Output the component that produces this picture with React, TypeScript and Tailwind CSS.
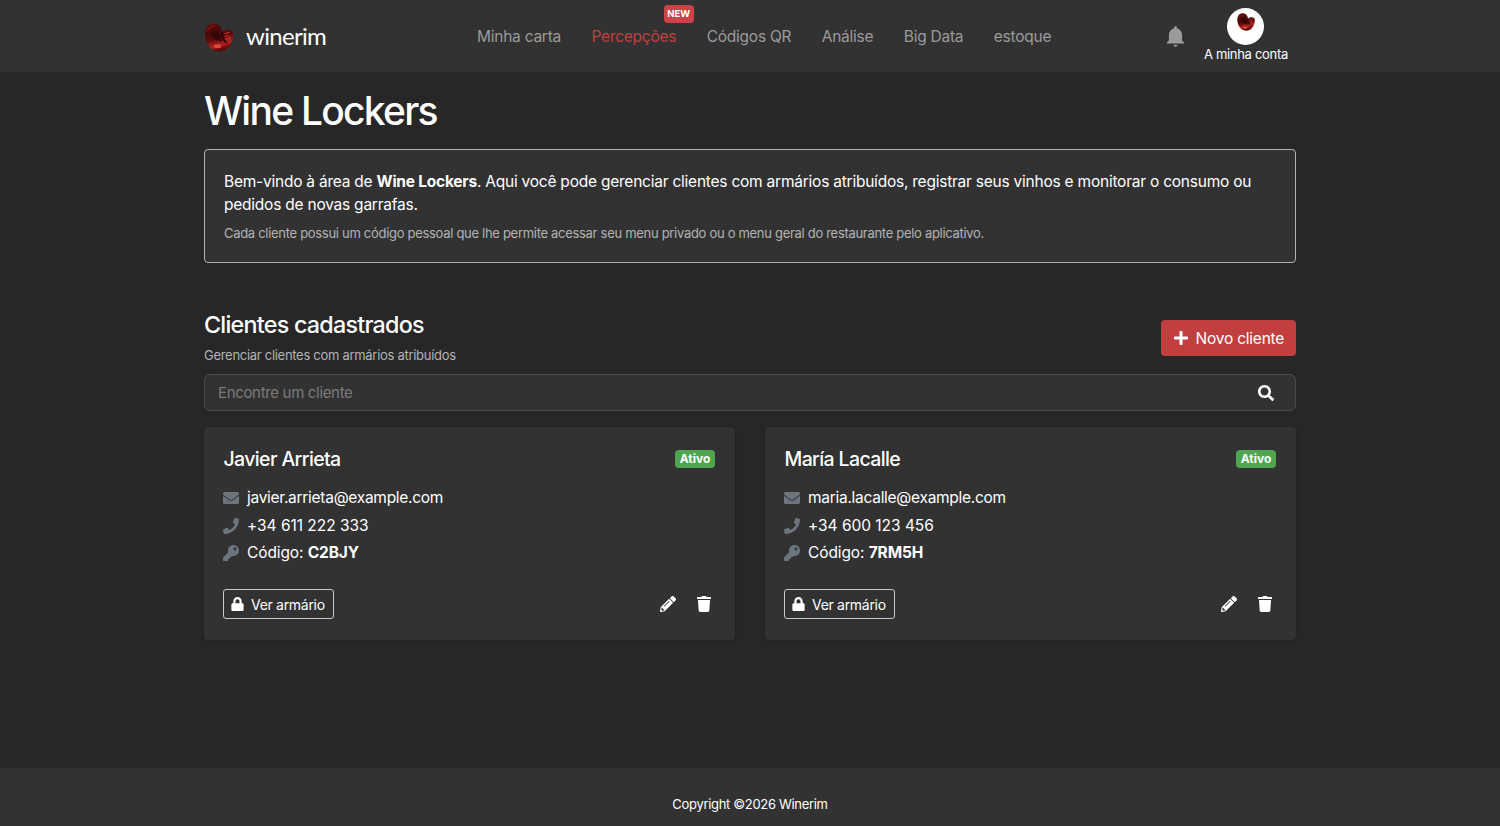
import { FaEnvelope, FaKey, FaLock, FaPencilAlt, FaPhone, FaPlus, FaSearch, FaTrash } from "react-icons/fa"
import { IoMdNotifications } from "react-icons/io"

type Client = { name: string; email: string; phone: string; code: string }

const clients: Client[] = [
    { name: "Javier Arrieta", email: "javier.arrieta@example.com", phone: "+34 611 222 333", code: "C2BJY" },
    { name: "María Lacalle", email: "maria.lacalle@example.com", phone: "+34 600 123 456", code: "7RM5H" },
]

const links = ["Minha carta", "Percepções", "Códigos QR", "Análise", "Big Data", "estoque"]

function Logo(props: { id: string; className: string }) {
    return (
        <svg viewBox="0 0 30 30" className={props.className}>
            <defs>
                <linearGradient id={props.id + "-base"} x1="0" y1="0" x2="0.3" y2="1">
                    <stop offset="0" stopColor="#6e0f0e" />
                    <stop offset="0.3" stopColor="#4a0909" />
                    <stop offset="0.6" stopColor="#5c0c0b" />
                    <stop offset="0.85" stopColor="#b3211e" />
                    <stop offset="1" stopColor="#5a0b0a" />
                </linearGradient>
            </defs>
            <path d="M0.5 11C0.5 5 4 0.5 9 0.5c5 0 8.500 3 9.500 8.500C21 7 25 6 28 8c3 3 1.500 10-1 14-3 5-7 7.500-12 7.500C6 29.500 0.500 20 0.500 11z" fill={`url(#${props.id}-base)`} />
            <path d="M18.500 9C17.500 13 19 18 23 20.500" stroke="#1f0404" strokeWidth="1.500" fill="none" />
            <path d="M6 11c2-3 6-3 9-1 2 3 2 6 4 9-5 0-6-1-8-2-3-1-4-3-5-6z" fill="#250505" opacity="0.7" />
            <ellipse cx="13.5" cy="24" rx="4" ry="2" fill="#e8524a" opacity="0.8" />
            <path d="M21 11l5-1.500M21 14l4-1M22 17l3-2M25 18l2-4" stroke="#d8403a" strokeWidth="1.100" opacity="0.8" fill="none" />
            <path d="M3 9c1-4 4-6 8-6" stroke="#a81d1a" strokeWidth="1.200" opacity="0.6" fill="none" />
        </svg>
    )
}

function Header() {
    return (
        <header className="h-[72px] bg-[#323232]">
            <div className="w-[1092px] h-full mx-auto flex items-center">
                <div className="w-[273px] flex items-center gap-[12px]">
                    <Logo id="brand" className="w-[30px] h-[29px] mt-[2px]" />
                    <span className="font-[Lato] text-[24px] leading-none tracking-[-0.7px]">winerim</span>
                </div>
                <nav className="flex gap-[30.5px] pt-px text-[15.5px] leading-6 tracking-[-0.25px] text-[#9b9b9b]">
                    {links.map((link) => (
                        <a key={link} href="#" className={link === "Percepções" ? "relative whitespace-nowrap text-[#c13f3f]" : "whitespace-nowrap"}>
                            {link}
                            {link === "Percepções" && (
                                <span className="absolute -top-[20px] -right-[17.5px] w-[30px] h-[18px] rounded-[4px] bg-[#cc4249] text-white text-[9.5px] leading-[18px] tracking-normal text-center font-bold">NEW</span>
                            )}
                        </a>
                    ))}
                </nav>
                <div className="ml-auto flex items-center gap-4 pr-2 pb-[2px]">
                    <IoMdNotifications className="w-[25px] h-[25px] mt-[2px] text-[#9b9b9b]" />
                    <a href="#" className="flex flex-col items-center">
                        <span className="w-[37px] h-[37px] rounded-full bg-white flex justify-center pt-[5px]">
                            <Logo id="account" className="w-[18px] h-[18px]" />
                        </span>
                        <span className="text-[13px] leading-[18px] tracking-[-0.3px]">A minha conta</span>
                    </a>
                </div>
            </div>
        </header>
    )
}

function ClientCard(props: { client: Client }) {
    const { client } = props
    return (
        <div className="h-[213px] rounded-[4px] bg-[#323232] pl-[19px] pr-[20px] pt-[20px] shadow-sm">
            <div className="flex items-center justify-between h-6">
                <h3 className="pt-px pl-[0.5px] text-[19.5px] font-medium tracking-[-0.63px]">{client.name}</h3>
                <span className="w-10 h-[18px] mb-px rounded-[4px] bg-[#50a54f] text-center text-[12px] leading-[18px] font-bold">Ativo</span>
            </div>
            <ul className="mt-[13px] text-[15.5px] leading-[27.7px]">
                <li className="flex items-center gap-2"><FaEnvelope className="text-[#6c757d] w-4 h-4" /><span className="tracking-[-0.28px]">{client.email}</span></li>
                <li className="flex items-center gap-2"><FaPhone className="text-[#6c757d] w-4 h-4" /><span className="tracking-[-0.03px]">{client.phone}</span></li>
                <li className="flex items-center gap-2"><FaKey className="text-[#6c757d] w-4 h-4" /><span className="tracking-[-0.1px]">Código: <b>{client.code}</b></span></li>
            </ul>
            <div className="mt-[22px] flex items-center justify-between">
                <button className="w-[111px] h-[30px] flex items-center gap-[7px] rounded-[3px] border border-[#c8c8c8] pl-[7px] text-[14px] tracking-[-0.3px] whitespace-nowrap">
                    <FaLock className="w-[13px] h-[14px]" />Ver armário
                </button>
                <div className="flex gap-5 pr-[3px]">
                    <FaPencilAlt className="w-4 h-4" />
                    <FaTrash className="w-4 h-4" />
                </div>
            </div>
        </div>
    )
}

function App() {
    return (
        <div className="h-[826px] flex flex-col bg-[#272727] text-white font-[Inter,sans-serif]">
            <Header />
            <main className="w-[1092px] mx-auto flex-1">
                <h1 className="mt-[15px] text-[39px] leading-[48px] font-medium tracking-[-1.75px]">Wine Lockers</h1>
                <section className="mt-[14px] h-[114px] rounded-[4px] border border-[#b4b4b4] bg-[#323232] px-[19px] pt-[20px]">
                    <p className="text-[15.5px] leading-[23px] tracking-[-0.23px]">
                        Bem-vindo à área de <b>Wine Lockers</b>. Aqui você pode gerenciar clientes com armários atribuídos, registrar seus vinhos e monitorar o consumo ou pedidos de novas garrafas.
                    </p>
                    <p className="mt-[7px] text-[13px] leading-5 tracking-[-0.3px] text-[#b4b4b4]">Cada cliente possui um código pessoal que lhe permite acessar seu menu privado ou o menu geral do restaurante pelo aplicativo.</p>
                </section>
                <div className="mt-[47px] flex justify-between">
                    <div>
                        <h2 className="text-[23.3px] leading-[29px] font-medium tracking-[-0.75px]">Clientes cadastrados</h2>
                        <p className="mt-[6px] text-[13px] leading-5 tracking-[-0.29px] text-[#b4b4b4]">Gerenciar clientes com armários atribuídos</p>
                    </div>
                    <button className="mt-[10px] w-[135px] h-[36px] flex items-center gap-[7px] rounded-[4px] bg-[#c13f3f] pl-[11.5px] text-[15.5px] tracking-[-0.22px] whitespace-nowrap">
                        <FaPlus className="w-4 h-4" />
                        <span className="pt-px">Novo cliente</span>
                    </button>
                </div>
                <div className="mt-[9px] h-[37px] flex items-center rounded-[6px] border border-[#47494d] bg-[#323232] pl-[13px] pr-[21px]">
                    <input className="flex-1 pt-[2px] text-[15px] tracking-[-0.33px] outline-none placeholder:text-[#7b7b7b]" placeholder="Encontre um cliente" />
                    <FaSearch className="w-4 h-4" />
                </div>
                <div className="mt-4 grid grid-cols-2 gap-[30px]">
                    {clients.map((client) => <ClientCard key={client.code} client={client} />)}
                </div>
            </main>
            <footer className="h-[58px] bg-[#323232] pt-[26px] text-center text-[13px] leading-5 tracking-[-0.32px]">Copyright ©2026 Winerim</footer>
        </div>
    )
}

export default App
